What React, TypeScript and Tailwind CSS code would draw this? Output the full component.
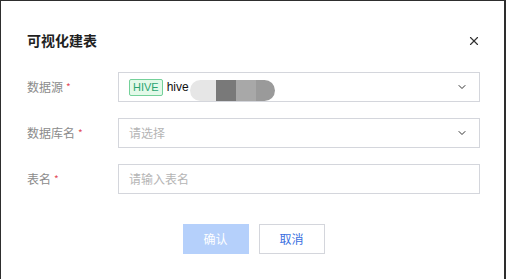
import { X, ChevronDown } from 'lucide-react';

const font = { fontFamily: '"Noto Sans CJK SC", "Liberation Sans", sans-serif' };

function Label({ text }: { text: string }) {
  return (
    <div className="w-[91px] shrink-0 flex items-center text-[12px] text-[#8b8b8b]">
      <span>{text}</span>
      <span className="ml-[3px] text-[#e34d59] text-[10px] leading-none">*</span>
    </div>
  );
}

export default function App() {
  return (
    <div className="w-[506px] h-[279px] bg-[#2e2e2e] pt-px pl-px pr-[2px] overflow-hidden" style={font}>
      <div className="bg-white h-[300px] pl-[26px] pr-[24px]">
        <div className="flex items-center justify-between pt-[27px] h-[50px]">
          <h2 className="text-[14px] font-bold text-[#1f1f1f] leading-[20px]">可视化建表</h2>
          <X className="w-[14px] h-[14px] text-[#333] mr-[-1px] mt-[3px]" strokeWidth={2} />
        </div>

        <div className="mt-[21px] flex flex-col gap-[16px]">
          <div className="flex h-[30px]">
            <Label text="数据源" />
            <div className="flex-1 border border-[#d4d6dc] flex items-center pl-[10px] pr-[11px]">
              <span className="h-[17px] px-[3px] border border-[#74d19a] bg-[#e3f9e9] text-[#2ba471] text-[11px] leading-[15px] rounded-[2px]" style={{ fontFamily: '"Liberation Sans", sans-serif' }}>
                HIVE
              </span>
              <span className="ml-[4px] text-[12px] text-[#111]" style={{ fontFamily: '"Liberation Sans", sans-serif' }}>hive</span>
              <div className="ml-[1px] h-[21px] w-[85px] mt-[6px] rounded-full overflow-hidden flex">
                <div className="w-[26px] bg-[#e6e6e6]" />
                <div className="w-[20px] bg-[#797979]" />
                <div className="w-[20px] bg-[#a8a8a8]" />
                <div className="w-[19px] bg-[#9a9a9a]" />
              </div>
              <div className="flex-1" />
              <ChevronDown className="w-[12px] h-[12px] text-[#333]" strokeWidth={2} />
            </div>
          </div>

          <div className="flex h-[30px]">
            <Label text="数据库名" />
            <div className="flex-1 border border-[#d4d6dc] flex items-center pl-[10px] pr-[11px]">
              <span className="text-[12px] text-[#b5b5b5]">请选择</span>
              <div className="flex-1" />
              <ChevronDown className="w-[12px] h-[12px] text-[#333]" strokeWidth={2} />
            </div>
          </div>

          <div className="flex h-[30px]">
            <Label text="表名" />
            <div className="flex-1 border border-[#d4d6dc] flex items-center pl-[10px] pr-[10px]">
              <span className="text-[12px] text-[#b5b5b5]">请输入表名</span>
            </div>
          </div>
        </div>

        <div className="flex justify-center gap-[10px] mt-[30px]">
          <button className="w-[66px] h-[30px] bg-[#b5d0fb] text-white text-[12px]">确认</button>
          <button className="w-[66px] h-[30px] border border-[#d4d6dc] text-[#3a6fe0] text-[12px] bg-white">取消</button>
        </div>
      </div>
    </div>
  );
}
